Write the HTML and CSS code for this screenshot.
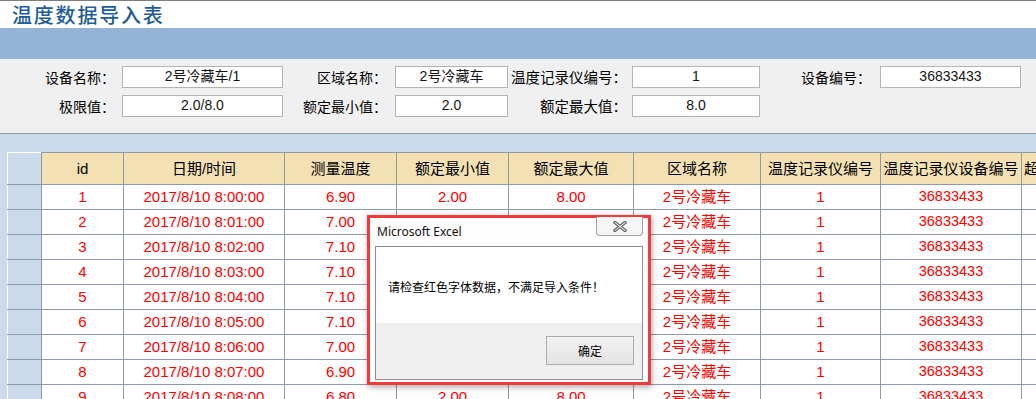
FILE: index.html
```html
<!DOCTYPE html>
<html lang="zh-CN">
<head>
<meta charset="utf-8">
<title>温度数据导入表</title>
<link rel="stylesheet" href="styles.css">
</head>
<body>
<div class="page">
  <header class="title-bar"><h1 class="title">温度数据导入表</h1></header>
  <div class="band"></div>
  <section class="form">
    <span class="lbl pr7">设备名称：</span><div class="field">2号冷藏车/1</div>
    <span class="lbl pr8">区域名称：</span><div class="field">2号冷藏车</div>
    <span class="lbl wide">温度记录仪编号：</span><div class="field">1</div>
    <span class="lbl pr9">设备编号：</span><div class="field">36833433</div>
    <span class="lbl pr7">极限值：</span><div class="field">2.0/8.0</div>
    <span class="lbl pr8">额定最小值：</span><div class="field">2.0</div>
    <span class="lbl wide">额定最大值：</span><div class="field">8.0</div>
  </section>
  <section class="grid-area">
    <table class="data">
      <colgroup>
        <col class="c-rh"><col class="c-id"><col class="c-dt"><col class="c-t"><col class="c-min"><col class="c-max"><col class="c-area"><col class="c-rec"><col class="c-dev"><col class="c-more">
      </colgroup>
      <thead>
        <tr><th class="rh corner"></th><th>id</th><th>日期/时间</th><th>测量温度</th><th>额定最小值</th><th>额定最大值</th><th>区域名称</th><th>温度记录仪编号</th><th>温度记录仪设备编号</th><th class="more">超</th></tr>
      </thead>
      <tbody>
        <tr><td class="rh"></td><td>1</td><td>2017/8/10 8:00:00</td><td>6.90</td><td>2.00</td><td>8.00</td><td>2号冷藏车</td><td>1</td><td class="dev">36833433</td><td></td></tr>
        <tr><td class="rh"></td><td>2</td><td>2017/8/10 8:01:00</td><td>7.00</td><td>2.00</td><td>8.00</td><td>2号冷藏车</td><td>1</td><td class="dev">36833433</td><td></td></tr>
        <tr><td class="rh"></td><td>3</td><td>2017/8/10 8:02:00</td><td>7.10</td><td>2.00</td><td>8.00</td><td>2号冷藏车</td><td>1</td><td class="dev">36833433</td><td></td></tr>
        <tr><td class="rh"></td><td>4</td><td>2017/8/10 8:03:00</td><td>7.10</td><td>2.00</td><td>8.00</td><td>2号冷藏车</td><td>1</td><td class="dev">36833433</td><td></td></tr>
        <tr><td class="rh"></td><td>5</td><td>2017/8/10 8:04:00</td><td>7.10</td><td>2.00</td><td>8.00</td><td>2号冷藏车</td><td>1</td><td class="dev">36833433</td><td></td></tr>
        <tr><td class="rh"></td><td>6</td><td>2017/8/10 8:05:00</td><td>7.10</td><td>2.00</td><td>8.00</td><td>2号冷藏车</td><td>1</td><td class="dev">36833433</td><td></td></tr>
        <tr><td class="rh"></td><td>7</td><td>2017/8/10 8:06:00</td><td>7.00</td><td>2.00</td><td>8.00</td><td>2号冷藏车</td><td>1</td><td class="dev">36833433</td><td></td></tr>
        <tr><td class="rh"></td><td>8</td><td>2017/8/10 8:07:00</td><td>6.90</td><td>2.00</td><td>8.00</td><td>2号冷藏车</td><td>1</td><td class="dev">36833433</td><td></td></tr>
        <tr><td class="rh"></td><td>9</td><td>2017/8/10 8:08:00</td><td>6.80</td><td>2.00</td><td>8.00</td><td>2号冷藏车</td><td>1</td><td class="dev">36833433</td><td></td></tr>
      </tbody>
    </table>
  </section>

  <div class="dialog" role="dialog">
    <div class="dlg-title">Microsoft Excel</div>
    <div class="dlg-close">
      <svg width="14" height="11" viewBox="0 0 14 11">
        <path d="M2 1.5 L12 9.5 M12 1.5 L2 9.5" stroke="#5c5c5c" stroke-width="3.2" stroke-linecap="square" fill="none"/>
        <path d="M2 1.5 L12 9.5 M12 1.5 L2 9.5" stroke="#e4e4e4" stroke-width="1.1" stroke-linecap="square" fill="none"/>
      </svg>
    </div>
    <div class="dlg-panel">
      <div class="dlg-body">请检查红色字体数据，不满足导入条件！</div>
      <div class="dlg-foot"><button class="dlg-btn">确定</button></div>
    </div>
  </div>
</div>
</body>
</html>
```

FILE: styles.css
```css
html, body {
  margin: 0;
  padding: 0;
}
body {
  width: 1036px;
  height: 399px;
  overflow: hidden;
  background: #cbdaea;
  font-family: "Liberation Sans", "Noto Sans CJK SC", sans-serif;
  color: #000;
}
.page {
  position: relative;
  width: 1036px;
  height: 399px;
  overflow: hidden;
}

/* title */
.title-bar {
  height: 27px;
  border-top: 1px solid #7f7f7f;
  background: #fff;
  padding-left: 12px;
  display: flex;
  align-items: center;
}
.title {
  margin: 0;
  font-family: "Noto Sans CJK SC", sans-serif;
  font-weight: 500;
  font-size: 20px;
  line-height: 1;
  letter-spacing: 1.8px;
  color: #1f5c99;
}
.band {
  height: 31px;
  background: #95b3d7;
}

/* form */
.form {
  box-sizing: border-box;
  height: 75px;
  padding-top: 7px;
  background: #f0f0f0;
  border-bottom: 1px solid #8d99a6;
  display: grid;
  grid-template-columns: 122px 161px 112px 113px 124px 128px 120px 141px;
  grid-template-rows: 22px 22px;
  row-gap: 7px;
}
.lbl {
  font-family: "Noto Sans CJK SC", sans-serif;
  font-size: 14px;
  line-height: 22px;
  text-align: right;
  padding-right: 5px;
  white-space: nowrap;
}
.lbl.pr7 { padding-right: 7px; }
.lbl.pr8 { padding-right: 8px; }
.lbl.pr9 { padding-right: 9px; }
.lbl.wide {
  font-size: 14.5px;
  padding-right: 5px;
}
.field {
  box-sizing: border-box;
  background: #fff;
  border: 1px solid #b4b4b4;
  font-size: 14px;
  line-height: 19px;
  text-align: center;
  color: #141414;
  white-space: nowrap;
  overflow: hidden;
}

/* table */
.grid-area {
  padding: 18px 0 0 7px;
}
.data {
  border-collapse: collapse;
  table-layout: fixed;
  width: 1074px;
}
.c-rh { width: 34px; }
.c-id { width: 82px; }
.c-dt { width: 161px; }
.c-t { width: 112px; }
.c-min { width: 112px; }
.c-max { width: 125px; }
.c-area { width: 127px; }
.c-rec { width: 120px; }
.c-dev { width: 141px; }
.c-more { width: 60px; }

.data th, .data td {
  border: 1px solid #8f9aa8;
  padding: 0;
  text-align: center;
  white-space: nowrap;
  overflow: hidden;
  box-sizing: border-box;
}
.data th {
  height: 32px;
  background: #f3e1b3;
  font-family: "Liberation Sans", "Noto Sans CJK SC", sans-serif;
  font-weight: normal;
  font-size: 15px;
  line-height: 16px;
  color: #000;
}
.data th.more {
  text-align: left;
  padding-left: 2px;
}
.data tbody tr {
  height: 25px;
}
.data td {
  height: 25px;
  background: #fff;
  color: #ff0000;
  font-size: 15px;
  line-height: 14px;
}
.data td.dev {
  font-size: 14.5px;
  padding-bottom: 3px;
}
.data .rh {
  background: #cbdaea;
  border-left: 1px solid #fff;
}
.data .corner {
  border-top: 1px solid #fff;
}

/* dialog */
.dialog {
  position: absolute;
  left: 367px;
  top: 215px;
  width: 284px;
  height: 170px;
  box-sizing: border-box;
  border: 3px solid #f03b3b;
  background: #fdfdfe;
  box-shadow: 1px 2px 6px rgba(0, 0, 0, 0.35);
  font-family: "Noto Sans CJK SC", sans-serif;
}
.dlg-title {
  position: absolute;
  left: 7px;
  top: 5px;
  font-family: "Noto Sans", "Open Sans", sans-serif;
  font-size: 12px;
  line-height: 18px;
  color: #111;
}
.dlg-close {
  position: absolute;
  left: 226px;
  top: -1px;
  width: 47px;
  height: 19px;
  box-sizing: border-box;
  border: 1px solid #a0a0a0;
  border-top: none;
  border-radius: 0 0 4px 4px;
  background: #f6f6f6;
  display: flex;
  align-items: center;
  justify-content: center;
}
.dlg-panel {
  position: absolute;
  left: 5px;
  top: 28px;
  width: 268px;
  height: 134px;
  box-sizing: border-box;
  border: 1px solid #8c8c8c;
  display: flex;
  flex-direction: column;
}
.dlg-body {
  height: 76px;
  background: #fff;
  padding-left: 12px;
  box-sizing: border-box;
  font-size: 12px;
  line-height: 18px;
  padding-top: 31px;
  color: #000;
}
.dlg-foot {
  flex: 1;
  background: #f0f0f0;
  display: flex;
  justify-content: flex-end;
  align-items: flex-start;
  padding: 13px 8px 0 0;
}
.dlg-btn {
  width: 88px;
  height: 29px;
  box-sizing: border-box;
  border: 1px solid #adadad;
  background: linear-gradient(#f2f2f2, #e3e3e3);
  font-family: "Noto Sans CJK SC", sans-serif;
  font-size: 12px;
  color: #000;
  padding: 0;
}
```
